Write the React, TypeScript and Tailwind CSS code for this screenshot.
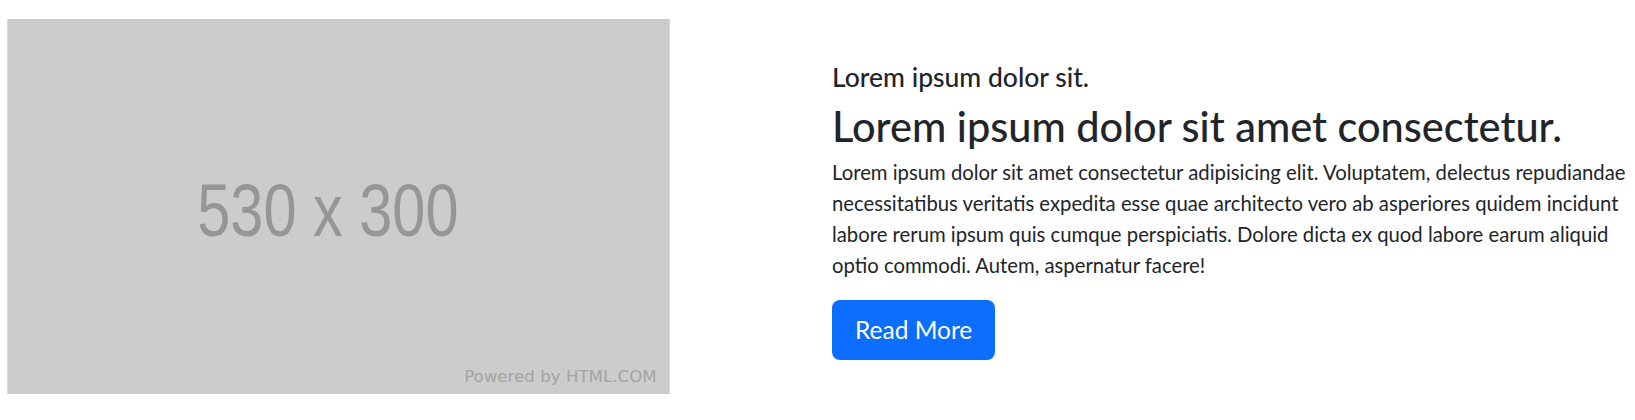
import React from 'react';

function Placeholder() {
  return (
    <svg
      width="663"
      height="375"
      viewBox="0 0 530 300"
      className="block shrink-0"
      xmlns="http://www.w3.org/2000/svg"
    >
      <rect width="530" height="300" fill="#cccccc" />
      <text
        x="152"
        y="173.5"
        fill="#969696"
        fontFamily="'Liberation Sans', Arial, sans-serif"
        fontSize="59"
        textLength="209"
        lengthAdjust="spacingAndGlyphs"
      >
        530 x 300
      </text>
      <text
        x="365.5"
        y="290"
        fill="#a3a3a3"
        fontFamily="'DejaVu Sans', Verdana, sans-serif"
        fontSize="13.1"
        textLength="154"
        lengthAdjust="spacingAndGlyphs"
      >
        Powered by HTML.COM
      </text>
    </svg>
  );
}

export default function App() {
  return (
    <div className="bg-white min-h-[420px] font-['Lato','Segoe_UI',sans-serif] text-[#212529]">
      <div className="flex items-start pl-[7px] pt-[19px]">
        <Placeholder />
        <div className="ml-[162px] mt-[44px] w-[800px]">
          <h4 className="text-[26.5px] leading-[29px] font-medium mb-[10px]">
            Lorem ipsum dolor sit.
          </h4>
          <h1 className="text-[41.5px] leading-[48px] font-medium mb-[7px]">
            Lorem ipsum dolor sit amet consectetur.
          </h1>
          <p className="text-[20.3px] leading-[31px] mb-[19px]">
            Lorem ipsum dolor sit amet consectetur adipisicing elit. Voluptatem, delectus
            repudiandae necessitatibus veritatis expedita esse quae architecto vero ab
            asperiores quidem incidunt labore rerum ipsum quis cumque perspiciatis. Dolore
            dicta ex quod labore earum aliquid optio commodi. Autem, aspernatur facere!
          </p>
          <button
            type="button"
            className="bg-[#0d6efd] text-white text-[24.5px] leading-[36px] px-[23px] py-[12px] rounded-lg"
          >
            Read More
          </button>
        </div>
      </div>
    </div>
  );
}
